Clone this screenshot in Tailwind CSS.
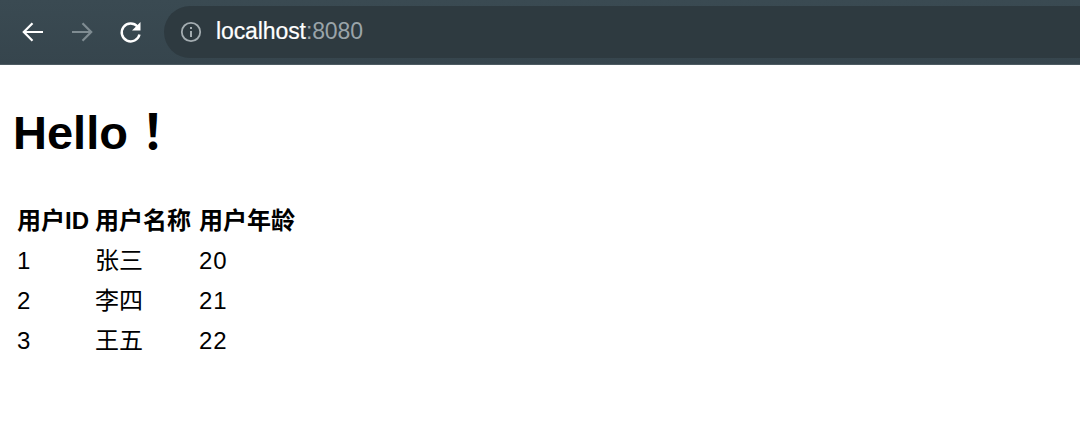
<!DOCTYPE html>
<html>
<head>
<meta charset="utf-8">
<script src="https://cdn.jsdelivr.net/npm/@tailwindcss/browser@4"></script>
</head>
<body class="bg-white text-black font-['Liberation_Sans','Noto_Sans_CJK_SC',sans-serif]">
<div class="w-[1080px] h-[428px] overflow-hidden">
  <div class="h-[65px] bg-gradient-to-b from-[#3a4a52] to-[#36454d] border-b border-[#4d5b62] flex items-center pl-[20px]">
    <svg class="w-[26px] h-[26px]" viewBox="0 0 26 26" fill="none" stroke="#ffffff" stroke-width="2.2"><path d="M23 13H4.5M12.5 4.2L3.8 13L12.5 21.8"/></svg>
    <svg class="w-[26px] h-[26px] ml-[24px]" viewBox="0 0 26 26" fill="none" stroke="#7f8c92" stroke-width="2.2"><path d="M2 13H20.5M12.5 4.2L21.2 13L12.5 21.8"/></svg>
    <svg class="w-[26px] h-[26px] ml-[22px]" viewBox="0 0 26 26" fill="none" stroke="#ffffff" stroke-width="2.4"><path d="M19.5 7.5A9 9 0 1 0 21.5 15.5"/><path d="M22.5 3V11.5H14Z" fill="#ffffff" stroke="none"/></svg>
    <div class="ml-[20px] flex-1 h-[52px] mt-[-1px] bg-[#2e3a40] rounded-l-[26px] flex items-center pl-[16px]">
      <svg class="w-[22px] h-[22px]" viewBox="0 0 22 22" fill="none" stroke="#a4adb1" stroke-width="1.8"><circle cx="11" cy="11" r="9.2"/><path d="M11 10V16" stroke-width="2"/><path d="M11 6V8" stroke-width="2"/></svg>
      <span class="ml-[14px] text-[23px] leading-none text-white tracking-[-0.1px] [-webkit-text-stroke:0.2px_white]">localhost<span class="text-[#9aa4a9] [-webkit-text-stroke:0px]">:8080</span></span>
    </div>
  </div>
  <h1 class="h-[48px] text-[47px] font-bold leading-none mt-[39px] ml-[13px]">Hello<span class="ml-[1px] text-[48px] font-['Noto_Sans_CJK_JP',sans-serif]">！</span></h1>
  <table class="mt-[49px] ml-[12px] border-separate border-spacing-x-[2px] border-spacing-y-0 text-[24px] leading-[40px]">
    <thead><tr class="text-left">
      <th class="pl-[3px] pr-[2px] py-0 font-bold">用户ID</th><th class="pl-[2px] pr-[3px] py-0 font-bold">用户名称</th><th class="pl-[3px] pr-[2px] py-0 font-bold">用户年龄</th>
    </tr></thead>
    <tbody>
      <tr><td class="pl-[3px] pr-[2px] tracking-[1px]">1</td><td class="pl-[2px] pr-[3px]">张三</td><td class="pl-[3px] pr-[2px] tracking-[1px]">20</td></tr>
      <tr><td class="pl-[3px] pr-[2px] tracking-[1px]">2</td><td class="pl-[2px] pr-[3px]">李四</td><td class="pl-[3px] pr-[2px] tracking-[1px]">21</td></tr>
      <tr><td class="pl-[3px] pr-[2px] tracking-[1px]">3</td><td class="pl-[2px] pr-[3px]">王五</td><td class="pl-[3px] pr-[2px] tracking-[1px]">22</td></tr>
    </tbody>
  </table>
</div>
</body>
</html>
